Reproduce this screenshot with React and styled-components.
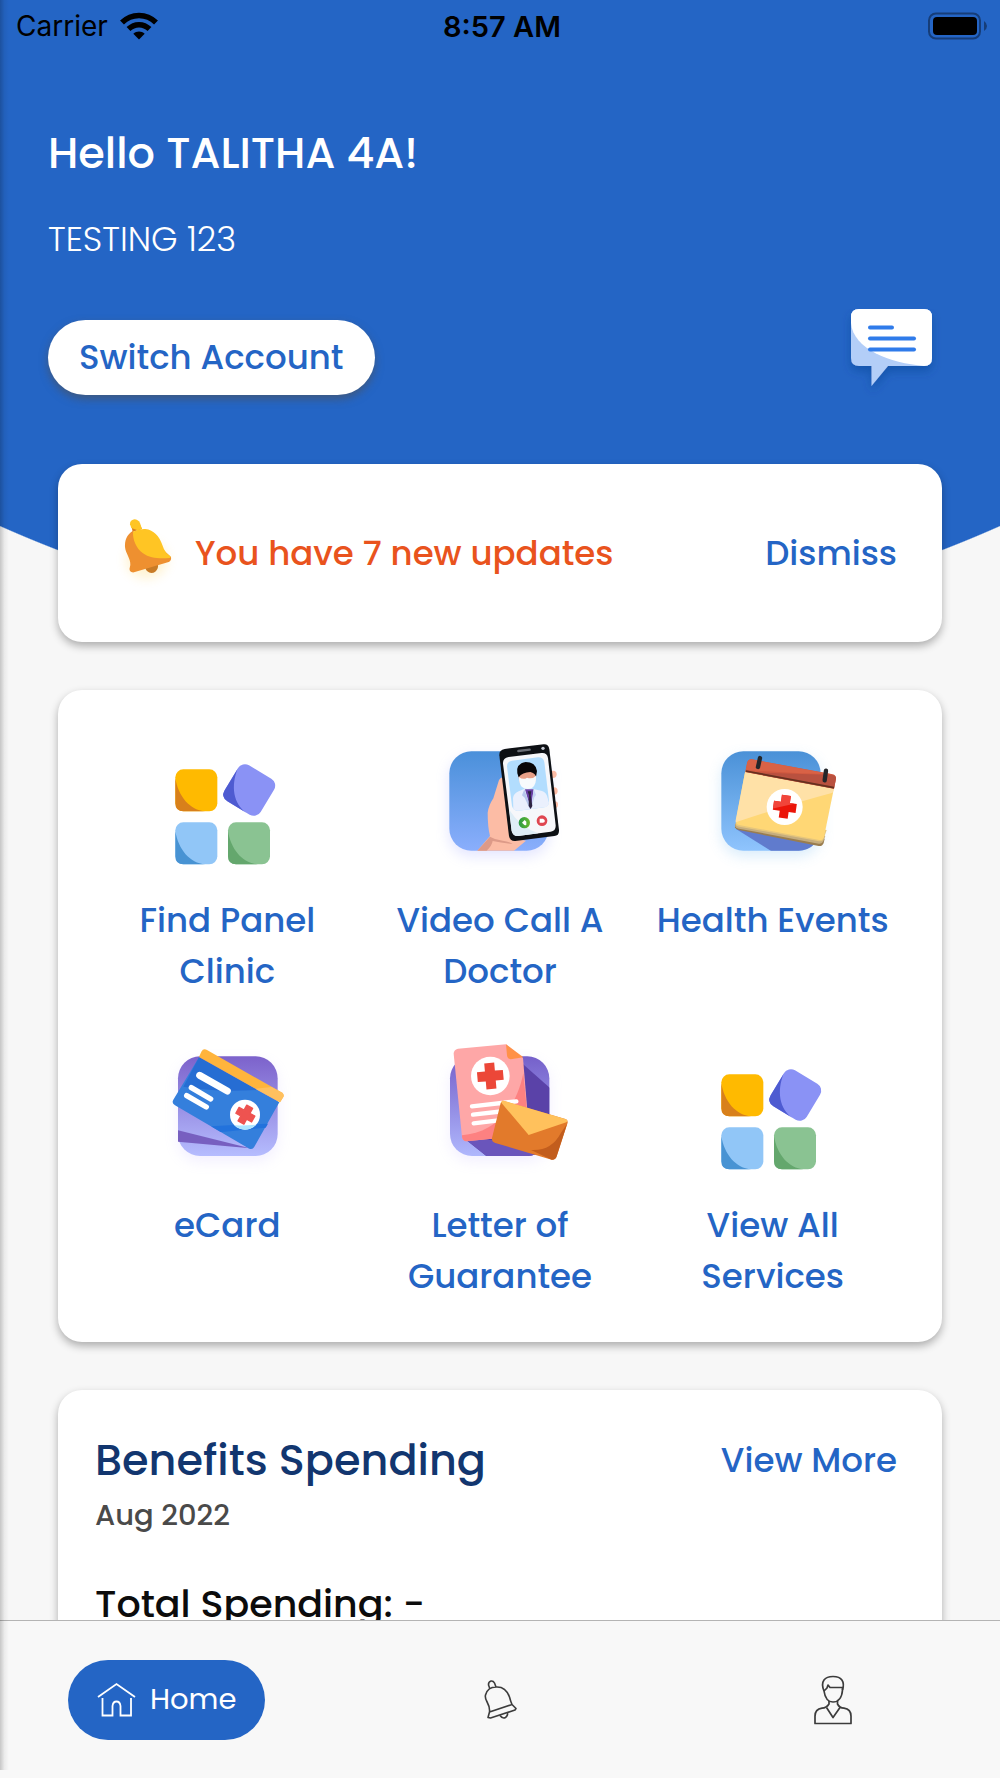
import React, { useState } from 'react';
import styled, { createGlobalStyle } from 'styled-components';

const GlobalStyle = createGlobalStyle`
  * {
    box-sizing: border-box;
  }

  body {
    margin: 0;
    font-family: Poppins, Inter, sans-serif;
    background-color: #f7f7f7;
  }

  h1, h2, p {
    margin: 0;
  }

  button {
    padding: 0;
    border: none;
    background: none;
    font-family: inherit;
    cursor: pointer;
  }

  a {
    text-decoration: none;
  }

  svg {
    display: block;
    flex: none;
  }
`;

const Screen = styled.div`
  position: relative;
  display: flex;
  flex-direction: column;
  height: 100vh;

  /* shadow along the left edge */
  &::after {
    content: '';
    position: absolute;
    inset: 0 auto 8px 0;
    width: 9px;
    background: linear-gradient(to right, rgba(0, 0, 0, 0.2), rgba(0, 0, 0, 0.05) 50%, transparent);
    pointer-events: none;
  }
`;

const Content = styled.div`
  flex: 1;
  min-height: 0;
  overflow-y: auto;
  scrollbar-width: none;
`;

const Page = styled.div`
  background: radial-gradient(
    ellipse 123% 1231px at 50% -598px,
    #2465c5 99.9%,
    #f7f7f7 100%
  );
`;

const StatusBar = styled.div`
  display: grid;
  grid-template-columns: 1fr auto 1fr;
  align-items: center;
  height: 52px;
  padding: 0 12px 0 16px;
  color: #000;
  font-family: Inter, sans-serif;
  font-size: 28px;
`;

const Carrier = styled.div`
  display: flex;
  align-items: center;
  gap: 12px;
`;

const Time = styled.span`
  font-size: 29px;
  font-weight: 600;
`;

const Battery = styled.div`
  justify-self: end;
`;

const Header = styled.header`
  padding: 68px 48px 58px;
  color: #fff;
`;

const Greeting = styled.h1`
  font-size: 43px;
  font-weight: 500;
  line-height: 66px;
`;

const AccountName = styled.p`
  margin-top: 28px;
  font-size: 34px;
  font-weight: 300;
  line-height: 51px;
`;

const HeaderRow = styled.div`
  display: flex;
  align-items: center;
  justify-content: space-between;
  margin-top: 44px;
`;

const SwitchButton = styled.button`
  height: 75px;
  padding: 0 31px;
  border-radius: 38px;
  background-color: #fff;
  color: #2465c5;
  font-size: 34px;
  font-weight: 500;
  box-shadow: 0 4px 8px rgba(80, 80, 80, 0.6);
`;

const Cards = styled.main`
  display: flex;
  flex-direction: column;
  gap: 48px;
  padding: 0 58px 48px;
`;

const Card = styled.section`
  border-radius: 24px;
  background-color: #fff;
  box-shadow: 0 4px 8px rgba(0, 0, 0, 0.3);
`;

const UpdatesCard = styled(Card)`
  display: flex;
  align-items: center;
  gap: 10px;
  padding: 44px 45px 44px 37px;
`;

const UpdatesText = styled.p`
  flex: 1;
  color: #e9531d;
  font-size: 34px;
  font-weight: 500;
`;

const TextButton = styled.button`
  color: #2465c5;
  font-size: 34px;
  font-weight: 500;
`;

const ServicesCard = styled(Card)`
  display: grid;
  grid-template-columns: repeat(3, 1fr);
  row-gap: 38px;
  padding: 40px 33px;
`;

const Service = styled.a`
  display: flex;
  flex-direction: column;
  align-items: center;
  gap: 25px;
  padding: 0 16px;
  color: #2465c5;
  font-size: 34px;
  font-weight: 500;
  line-height: 51px;
  text-align: center;
`;

const SpendingCard = styled(Card)`
  padding: 37px 45px 64px 37px;
`;

const SpendingHead = styled.div`
  display: flex;
  align-items: center;
  justify-content: space-between;
`;

const SpendingTitle = styled.h2`
  color: #12366f;
  font-size: 43px;
  font-weight: 500;
  line-height: 66px;
`;

const Month = styled.p`
  color: #4a4a4a;
  font-size: 29px;
  font-weight: 500;
  line-height: 44px;
`;

const Total = styled.p`
  margin-top: 38px;
  color: #0c0c0c;
  font-size: 38px;
  font-weight: 500;
  line-height: 57px;
`;

const TabBar = styled.nav`
  display: grid;
  grid-template-columns: repeat(3, 1fr);
  align-items: center;
  justify-items: center;
  height: 158px;
  border-top: 1px solid #b4b4b4;
  background-color: #f8f8f8;
`;

const Tab = styled.button`
  display: flex;
  align-items: center;
  gap: 14px;
  height: 80px;
  padding: 0 29px;
  border-radius: 40px;
  background-color: ${(props) => (props.$active ? '#2465c5' : 'transparent')};
  color: ${(props) => (props.$active ? '#fff' : '#3c3c3c')};
  font-size: 29px;
`;

function WifiIcon() {
  return (
    <svg width="38" height="28" viewBox="0 0 38 28" fill="none" aria-hidden="true">
      <path d="M2 10.5C11.500 1 26.500 1 36 10.500" stroke="#000" strokeWidth="5.500" />
      <path d="M8.500 17C14.500 11.200 23.500 11.200 29.500 17" stroke="#000" strokeWidth="5.500" />
      <path d="M13.300 21.800C16.500 18.600 21.500 18.600 24.700 21.800L19 27.500Z" fill="#000" />
    </svg>
  );
}

function BatteryIcon() {
  return (
    <svg width="60" height="28" viewBox="0 0 60 28" aria-hidden="true">
      <rect x="1" y="1.500" width="51" height="25" rx="7" fill="none" stroke="#163d78" strokeWidth="2" />
      <rect x="5" y="5" width="44" height="18" rx="4" fill="#000" />
      <path d="M56 9Q59 11 59 14Q59 17 56 19Z" fill="#163d78" />
    </svg>
  );
}

function ChatIcon() {
  return (
    <svg width="120" height="97" viewBox="0 0 120 97" aria-hidden="true">
      <defs>
        <filter id="chatShadow" x="-30%" y="-30%" width="160%" height="160%">
          <feDropShadow dx="0" dy="5" stdDeviation="5" floodColor="#0d3f8e" floodOpacity="0.45" />
        </filter>
      </defs>
      <g filter="url(#chatShadow)">
        <path
          d="M27 0H92Q100 0 100 8V49Q100 57 92 57H56L39.500 77V57H27Q19 57 19 49V8Q19 0 27 0Z"
          fill="#b3cef8"
        />
        <path d="M27 0H92Q100 0 100 8V49Q100 57 92 57C58 54 21 40 19 14V8Q19 0 27 0Z" fill="#fff" />
      </g>
      <g stroke="#2f7bea" strokeWidth="4" strokeLinecap="round">
        <path d="M38 18.500H60" />
        <path d="M38 29.500H82" />
        <path d="M38 40.500H82" />
      </g>
    </svg>
  );
}

function YellowBellIcon() {
  return (
    <svg width="90" height="90" viewBox="85 203 270 270" aria-hidden="true">
      <defs>
        <filter id="bellGlow" x="-50%" y="-50%" width="200%" height="200%">
          <feGaussianBlur stdDeviation="16" />
        </filter>
      </defs>
      <ellipse cx="240" cy="358" rx="62" ry="56" fill="#ffc524" opacity="0.2" filter="url(#bellGlow)" />
      <path d="M236 384L272 372Q276 374 273 384Q268 398 254 398Q241 397 236 384Z" fill="#c87b26" />
      <path
        d="M198 272C180 283 174 301 175 320C177 340 192 354 191 374Q187 386 190 392Q194 397 202 396L306 365Q315 361 313 350L270 310Z"
        fill="#ee9030"
      />
      <path d="M193 252L198 274L226 266L218 250Z" fill="#d9801e" />
      <path
        d="M199 274Q216 265 236 266C262 269 277 288 285 309Q291 328 299 338L311 348Q314 351 309 353C281 355 250 355 229 339C208 323 198 298 199 274Z"
        fill="#ffc524"
      />
      <path d="M190 252Q189 240 203 237Q214 237 220 248L226 266L213 270L194 263Z" fill="#ffc524" />
    </svg>
  );
}

function Tile({ light, dark, transform }) {
  return (
    <g transform={transform}>
      <rect x="-63" y="-63" width="126" height="126" rx="24" fill={light} />
      <path d="M-63 -36C-54 18 -20 60 27 63H-39Q-63 63 -63 39Z" fill={dark} />
    </g>
  );
}

function TilesIcon() {
  return (
    <svg width="150" height="140" viewBox="6 -30 450 420" aria-hidden="true">
      <Tile light="#ffba00" dark="#d8801b" transform="translate(139 151)" />
      <Tile light="#8a92f5" dark="#4e5bd1" transform="translate(298 150) rotate(31)" />
      <Tile light="#91c6f7" dark="#4893d3" transform="translate(139 310)" />
      <Tile light="#8ac392" dark="#64a76d" transform="translate(297 310)" />
    </svg>
  );
}

function VideoCallIcon() {
  return (
    <svg width="150" height="140" viewBox="-15 0 450 420" aria-hidden="true">
      <defs>
        <linearGradient id="videoBg" x1="0" y1="0" x2="0" y2="1">
          <stop offset="0" stopColor="#4a90da" />
          <stop offset="1" stopColor="#8aaefc" />
        </linearGradient>
        <linearGradient id="callGreen" x1="0" y1="0" x2="1" y2="0">
          <stop offset="0" stopColor="#2b9a45" />
          <stop offset="1" stopColor="#66b92c" />
        </linearGradient>
        <filter id="videoGlow" x="-30%" y="-30%" width="160%" height="160%">
          <feGaussianBlur stdDeviation="20" />
        </filter>
      </defs>
      <rect x="58" y="80" width="298" height="298" rx="66" fill="#8f96ff" opacity="0.25" filter="url(#videoGlow)" />
      <rect x="58" y="64" width="298" height="298" rx="66" fill="url(#videoBg)" />
      <path
        d="M142 362L180 318Q173 290 173 248Q176 226 190 205L207 150Q213 139 226 143Q232 150 232 166L256 326L288 332L252 362Z"
        fill="#fcbca5"
      />
      <path d="M142 362L180 320Q196 330 218 332Q235 334 248 342Q215 339 188 333Q186 347 170 362Z" fill="#dd9a88" />
      <g fill="#fcbca5">
        <circle cx="369" cy="133" r="11" />
        <circle cx="372" cy="183" r="11" />
        <circle cx="374" cy="224" r="10" />
      </g>
      {/* phone */}
      <path
        d="M224 57L341 43Q356 42 358 58L387 300Q388 316 373 318L256 333Q240 334 237 318L208 76Q207 60 224 57Z"
        fill="#0d1014"
      />
      <path d="M265 63L299 59" stroke="#6a6d74" strokeWidth="7" strokeLinecap="round" />
      <circle cx="339" cy="55" r="5" fill="#c8ccd6" />
      <path
        d="M236 81L334 69Q351 67 354 84L377 286Q378 303 362 305L264 318Q249 319 245 303L219 101Q218 84 236 81Z"
        fill="#f6f7fa"
      />
      <path d="M238 240Q272 292 325 310L264 318Q249 319 245 303Z" fill="#deedf6" />
      <path
        d="M246 92L324 82Q340 81 343 97L357 212Q358 229 343 232L266 242Q250 243 246 228L231 110Q230 95 246 92Z"
        fill="#b2ddfe"
      />
      {/* doctor */}
      <path d="M250 238L249 204Q251 190 266 184L284 176H307L336 183Q350 188 353 204L357 218Q356 230 343 232L266 242Q256 243 250 238Z" fill="#eaf0fd" />
      <path d="M285 178L302 236L311 178Z" fill="#6940a4" />
      <path d="M283 178L276 196L284 203L299 236H303Z" fill="#b6c7ec" />
      <path d="M311 176L318 195L313 202L304 236Z" fill="#c7d5f4" />
      <path d="M293 184H304L302 196L307 228L302 237L296 228L297 196Z" fill="#2d2442" />
      <path d="M264 125H319L317 150Q311 174 292 175Q272 173 267 150Z" fill="#e7a088" />
      <path d="M262 130Q257 101 287 96Q317 96 321 123L318 140Q315 129 301 126Q277 127 266 142Z" fill="#080608" />
      <path d="M267 141Q279 151 291 143Q307 149 318 137Q320 164 306 174Q288 181 275 170Q266 159 267 141Z" fill="#f8fafc" />
      <circle cx="283" cy="278" r="17" fill="url(#callGreen)" />
      <path d="M276 278L284 270L289 275V284Q285 288 280 282Z" fill="#fff" />
      <circle cx="336" cy="272" r="16" fill="#df4650" />
      <path d="M329 266H339L344 270V276L339 278H329Z" fill="#fff" />
    </svg>
  );
}

function EventsIcon() {
  return (
    <svg width="150" height="140" viewBox="-6 0 450 420" aria-hidden="true">
      <defs>
        <linearGradient id="eventsBg" x1="0" y1="0" x2="0" y2="1">
          <stop offset="0" stopColor="#4a91d7" />
          <stop offset="1" stopColor="#8fc4fd" />
        </linearGradient>
        <filter id="eventsGlow" x="-30%" y="-30%" width="160%" height="160%">
          <feGaussianBlur stdDeviation="20" />
        </filter>
        <clipPath id="eventsClip">
          <rect x="64" y="64" width="298" height="298" rx="66" />
        </clipPath>
      </defs>
      <rect x="64" y="80" width="298" height="298" rx="66" fill="#68b4ee" opacity="0.25" filter="url(#eventsGlow)" />
      <rect x="64" y="64" width="298" height="298" rx="66" fill="url(#eventsBg)" />
      <g clipPath="url(#eventsClip)">
        <path d="M107 296L215 364H370V300Z" fill="#607bcd" />
      </g>
      <path d="M106 282L105 292Q107 298 116 300L356 348Q367 350 371 339L374 326Z" fill="#9a7d4f" />
      <path d="M106 280V290Q108 295 117 296L356 341Q366 343 370 334L376 318Z" fill="#c5ad7e" />
      <path d="M108 276L107 284Q109 289 118 290L357 334Q368 335 371 326L380 300Z" fill="#e6c67c" />
      <path d="M136 122L402 174L372 321Q369 332 358 330L117 285Q106 282 108 271Z" fill="#ffd775" />
      <path d="M136 122L402 174L398 188Q270 222 107 277V271Z" fill="#ffe1a7" />
      <path d="M142 96Q145 87 155 88L398 133Q409 136 408 146L402 176L136 126Z" fill="#cf583f" />
      <path d="M190 128L395 135Q409 136 408 146L402 176L136 126Z" fill="#b9513f" />
      <path d="M142 96Q145 87 155 88L395 133L300 130L150 121L137 119Z" fill="#d96246" />
      <path d="M137 123L402 173" stroke="#66301f" strokeWidth="5" />
      <g stroke="#24262a" strokeWidth="13" strokeLinecap="round">
        <path d="M180 84L174 111" />
        <path d="M378 122L374 151" />
      </g>
      <circle cx="254" cy="231" r="54" fill="#fff" />
      <g transform="rotate(8 254 230)">
        <path d="M241 196H268V217H289V244H268V265H241V244H220V217H241Z" fill="#eb1509" />
        <path d="M241 196H268V217H281L220 240V217H241Z" fill="#f1453a" />
      </g>
    </svg>
  );
}

function CardIcon() {
  return (
    <svg width="150" height="140" viewBox="6 15 450 420" aria-hidden="true">
      <defs>
        <linearGradient id="cardBg" x1="0" y1="0" x2="0" y2="1">
          <stop offset="0" stopColor="#7c62cb" />
          <stop offset="1" stopColor="#b5bcfe" />
        </linearGradient>
        <filter id="cardGlow" x="-30%" y="-30%" width="160%" height="160%">
          <feGaussianBlur stdDeviation="20" />
        </filter>
      </defs>
      <rect x="84" y="95" width="299" height="299" rx="66" fill="#b9a8ff" opacity="0.18" filter="url(#cardGlow)" />
      <rect x="84" y="79" width="299" height="299" rx="66" fill="url(#cardBg)" />
      <path d="M84 301L300 355L84 335Z" fill="#775fc0" />
      <path
        d="M147 82L388 217L313 350Q308 360 298 356L75 226Q64 219 70 209Z"
        fill="#347fdc"
      />
      <path d="M147 82L322 180Q210 188 100 170Z" fill="#266dd3" />
      <path d="M183 289Q270 284 354 281L347 293Q290 299 212 306Z" fill="#2272dc" />
      <path d="M147 81L154 65Q160 54 171 60L394 187Q404 193 400 201L390 217Z" fill="#ffb43c" />
      <path d="M316 176L365 171L394 187Q404 193 400 201L390 217Z" fill="#ffc05f" />
      <g stroke="#fff" strokeLinecap="round">
        <path d="M149 136L232 183" strokeWidth="21" />
        <path d="M124 173L182 207" strokeWidth="16" />
        <path d="M110 197L169 231" strokeWidth="16" />
      </g>
      <circle cx="285" cy="254" r="45" fill="#fff" />
      <path d="M253 286Q285 287 318 284Q302 299 285 299Q265 298 253 286Z" fill="#ace5ff" />
      <path
        d="M-10 -27H10V-10H27V10H10V27H-10V10H-27V-10H-10Z"
        transform="translate(286 254) rotate(29)"
        fill="#ee5350"
        stroke="#ee5350"
        strokeWidth="4"
        strokeLinejoin="round"
      />
    </svg>
  );
}

function LetterIcon() {
  return (
    <svg width="150" height="140" viewBox="-15 15 450 420" aria-hidden="true">
      <defs>
        <linearGradient id="letterBg" x1="0" y1="0" x2="0" y2="1">
          <stop offset="0" stopColor="#7560ca" />
          <stop offset="1" stopColor="#afb7fc" />
        </linearGradient>
        <filter id="letterGlow" x="-30%" y="-30%" width="160%" height="160%">
          <feGaussianBlur stdDeviation="20" />
        </filter>
        <clipPath id="letterClip">
          <rect x="60" y="79" width="298" height="299" rx="66" />
        </clipPath>
      </defs>
      <rect x="60" y="95" width="298" height="299" rx="66" fill="#b9a8ff" opacity="0.18" filter="url(#letterGlow)" />
      <rect x="60" y="79" width="298" height="299" rx="66" fill="url(#letterBg)" />
      <g clipPath="url(#letterClip)">
        <path d="M276 100L368 181V390H184L104 326Z" fill="#5a42a8" />
        <path d="M180 330H368V390H184L104 326Z" fill="#6a55bb" />
      </g>
      <path
        d="M84 56L228 43L279 84L298 315L109 334Q98 333 96 321L71 71Q71 59 84 56Z"
        fill="#fea7a7"
      />
      <path d="M96 316C180 310 255 253 280 130L298 315L109 334Q98 333 96 321Z" fill="#fd8181" />
      <path d="M228 43L280 82L242 88Q232 87 231 76Z" fill="#ff9148" />
      <circle cx="181" cy="138" r="58" fill="#fff" />
      <path
        d="M-15 -39H15V-15H39V15H15V39H-15V15H-39V-15H-15Z"
        transform="translate(181 138) rotate(-5)"
        fill="#ec4738"
      />
      <g stroke="#fff" strokeWidth="13" strokeLinecap="round">
        <path d="M126 229L259 214" />
        <path d="M129 254L225 243" />
        <path d="M131 280L205 271" />
      </g>
      <path d="M218 212L406 267Q414 269 413 278L380 379Q377 390 365 389L196 339Q184 335 186 324L212 219Z" fill="#e27a2b" />
      <path d="M411 282L380 379Q377 390 365 389L303 360Q364 364 392 310Z" fill="#c25d1d" />
      <path d="M221 212L406 267Q416 271 409 277L296 315L214 218Q214 210 221 212Z" fill="#ffc15c" />
    </svg>
  );
}

function HomeIcon() {
  return (
    <svg width="39" height="36" viewBox="0 0 39 36" fill="none" stroke="currentColor" strokeWidth="1.800" aria-hidden="true">
      <path d="M1 15L19.500 2L38 15" />
      <path d="M5.500 16V33.500H15.500V24Q16 19.500 19.500 19.500Q23 19.500 23.500 24V33.500H34V16" />
    </svg>
  );
}

function BellIcon() {
  return (
    <svg
      width="34"
      height="42"
      viewBox="-1 0 34 42"
      fill="none"
      stroke="currentColor"
      strokeWidth="1.600"
      strokeLinejoin="round"
      aria-hidden="true"
    >
      <path d="M6 10L4.500 6Q4.300 2.700 7 2Q9.300 1.700 10.500 4L12 8" />
      <path d="M5.500 33C6.500 24 0 22 1.500 16C3 10.500 7.500 8 12 8C19 7.500 23 11 25.500 18Q26.500 22 28 25.500L5.500 33L4 38.500L6.500 39L31 31L32 29.500L28 25.500" />
      <path d="M16 36.500Q18.500 40 21.500 38.500Q24 37 23.500 34" />
    </svg>
  );
}

function PersonIcon() {
  return (
    <svg
      width="38"
      height="50"
      viewBox="0 0 38 50"
      fill="none"
      stroke="currentColor"
      strokeWidth="1.700"
      strokeLinejoin="round"
      aria-hidden="true"
    >
      <path d="M10 16C6 6 11 1.500 19 1.500C28 1.500 31 7 28.500 15C28 23 24 27 19 27C14.500 27 11 23 10 16Z" />
      <path d="M10 16L13 13L14 10L16 12.500H28.500V15" />
      <path d="M15 26V29Q12.500 33 8 33.200Q1 34.500 1 41V48.500H37V41Q37 34.500 30 33.200Q25.500 33 23.500 29V26" />
      <path d="M12.500 32.500L19 42.500L26 32.500" />
    </svg>
  );
}

const services = [
  { id: 1, name: 'Find Panel Clinic', Icon: TilesIcon },
  { id: 2, name: 'Video Call A Doctor', Icon: VideoCallIcon },
  { id: 3, name: 'Health Events', Icon: EventsIcon },
  { id: 4, name: 'eCard', Icon: CardIcon },
  { id: 5, name: 'Letter of Guarantee', Icon: LetterIcon },
  { id: 6, name: 'View All Services', Icon: TilesIcon },
];

function App() {
  const [tab, setTab] = useState('home');

  return (
    <Screen>
      <GlobalStyle />
      <Content>
        <Page>
          <StatusBar>
            <Carrier>
              <span>Carrier</span>
              <WifiIcon />
            </Carrier>
            <Time>8:57 AM</Time>
            <Battery>
              <BatteryIcon />
            </Battery>
          </StatusBar>

          <Header>
            <Greeting>Hello TALITHA 4A!</Greeting>
            <AccountName>TESTING 123</AccountName>
            <HeaderRow>
              <SwitchButton type="button">Switch Account</SwitchButton>
              <button type="button" aria-label="Messages">
                <ChatIcon />
              </button>
            </HeaderRow>
          </Header>

          <Cards>
            <UpdatesCard>
              <YellowBellIcon />
              <UpdatesText>You have 7 new updates</UpdatesText>
              <TextButton type="button">Dismiss</TextButton>
            </UpdatesCard>

            <ServicesCard>
              {services.map(({ id, name, Icon }) => (
                <Service key={id} href="#">
                  <Icon />
                  <span>{name}</span>
                </Service>
              ))}
            </ServicesCard>

            <SpendingCard>
              <SpendingHead>
                <SpendingTitle>Benefits Spending</SpendingTitle>
                <TextButton type="button">View More</TextButton>
              </SpendingHead>
              <Month>Aug 2022</Month>
              <Total>Total Spending: -</Total>
            </SpendingCard>
          </Cards>
        </Page>
      </Content>

      <TabBar>
        <Tab type="button" $active={tab === 'home'} onClick={() => setTab('home')}>
          <HomeIcon />
          <span>Home</span>
        </Tab>
        <Tab type="button" aria-label="Notifications" onClick={() => setTab('notifications')} $active={tab === 'notifications'}>
          <BellIcon />
        </Tab>
        <Tab type="button" aria-label="Profile" onClick={() => setTab('profile')} $active={tab === 'profile'}>
          <PersonIcon />
        </Tab>
      </TabBar>
    </Screen>
  );
}

export default App;
